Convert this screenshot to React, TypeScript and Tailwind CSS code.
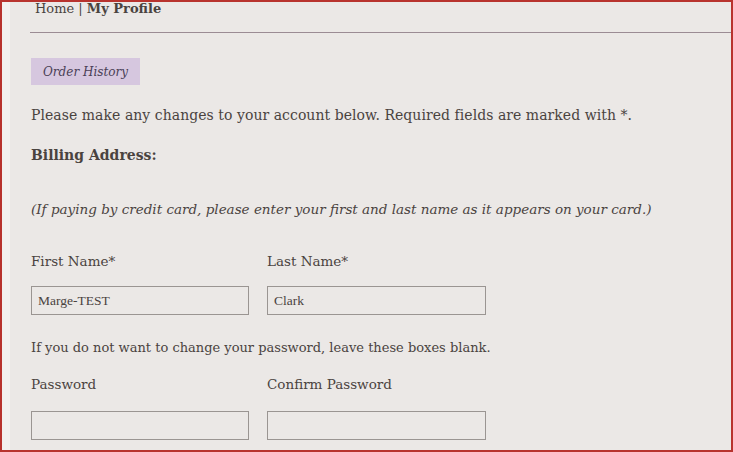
import React from "react";

export default function App() {
  const font = { fontFamily: '"DejaVu Serif", Georgia, serif' };
  return (
    <div className="w-[733px] h-[452px] bg-[#b8332e] p-[2px] overflow-hidden" style={font}>
      <div className="h-full w-full bg-[#f3f1ef] pl-[8px] pt-0">
        <div className="h-full w-full bg-[#ebe8e6] text-[#4a433f]">
          <div className="pl-[25px] pt-0 h-[30px] text-[13px] leading-[14px]">
            <span>Home</span> | <span className="font-bold">My Profile</span>
          </div>
          <div className="ml-[20px] h-px bg-[#9b8c94]" />
          <div className="pl-[21px] pt-[25px]">
            <div className="w-[109px] h-[27px] bg-[#d6c7df] flex items-center justify-center italic text-[12px] text-[#4a3f56]">
              Order History
            </div>
            <p className="mt-[21px] text-[14px] leading-[18px] tracking-[0.05px]">
              Please make any changes to your account below. Required fields are marked with *.
            </p>
            <p className="mt-[22px] text-[14px] leading-[18px] font-bold">Billing Address:</p>
            <p className="mt-[36px] text-[13.5px] leading-[18px] italic">
              (If paying by credit card, please enter your first and last name as it appears on your card.)
            </p>
            <div className="mt-[34px] flex gap-[18px] text-[13.5px] leading-[18px]">
              <div className="w-[218px]">
                <div>First Name*</div>
                <div
                  className="mt-[16px] h-[29px] border border-[#9a9592] flex items-center pl-[6px] text-[13.5px]"
                  style={{ fontFamily: '"Liberation Serif", serif' }}
                >
                  Marge-TEST
                </div>
              </div>
              <div className="w-[219px]">
                <div>Last Name*</div>
                <div
                  className="mt-[16px] h-[29px] border border-[#9a9592] flex items-center pl-[6px] text-[13.5px]"
                  style={{ fontFamily: '"Liberation Serif", serif' }}
                >
                  Clark
                </div>
              </div>
            </div>
            <p className="mt-[24px] text-[13px] leading-[18px]">
              If you do not want to change your password, leave these boxes blank.
            </p>
            <div className="mt-[18px] flex gap-[18px] text-[13.5px] leading-[18px]">
              <div className="w-[218px]">
                <div>Password</div>
                <div className="mt-[18px] h-[29px] border border-[#9a9592]" />
              </div>
              <div className="w-[219px]">
                <div>Confirm Password</div>
                <div className="mt-[18px] h-[29px] border border-[#9a9592]" />
              </div>
            </div>
          </div>
        </div>
      </div>
    </div>
  );
}
